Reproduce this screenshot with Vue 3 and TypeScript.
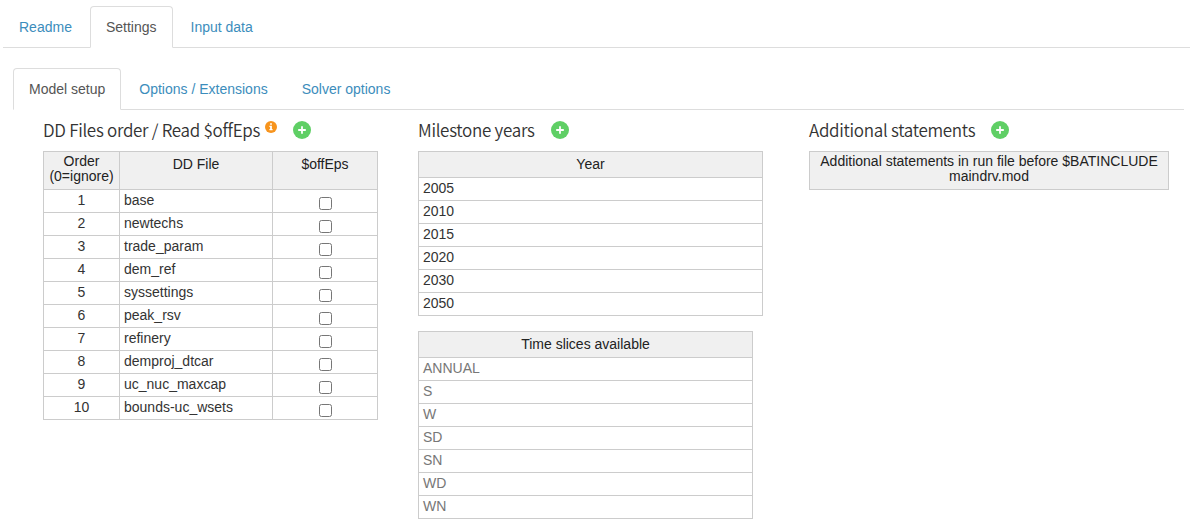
<script setup lang="ts">
import { ref } from 'vue'

interface DdFile {
  order: number
  name: string
  offEps: boolean
}

const mainTabs: string[] = ['Readme', 'Settings', 'Input data']
const subTabs: string[] = ['Model setup', 'Options / Extensions', 'Solver options']
const activeMain = ref<string>('Settings')
const activeSub = ref<string>('Model setup')

const names: string[] = [
  'base', 'newtechs', 'trade_param', 'dem_ref', 'syssettings',
  'peak_rsv', 'refinery', 'demproj_dtcar', 'uc_nuc_maxcap', 'bounds-uc_wsets',
]
const files = ref<DdFile[]>(names.map((name, i) => ({ order: i + 1, name, offEps: false })))
const years: number[] = [2005, 2010, 2015, 2020, 2030, 2050]
const slices: string[] = ['ANNUAL', 'S', 'W', 'SD', 'SN', 'WD', 'WN']
</script>

<template>
  <div class="page">
    <nav class="tabs">
      <a v-for="t in mainTabs" :key="t" class="tab" :class="{ active: t === activeMain }" @click="activeMain = t">{{ t }}</a>
    </nav>
    <div class="pane">
      <nav class="tabs">
        <a v-for="t in subTabs" :key="t" class="tab" :class="{ active: t === activeSub }" @click="activeSub = t">{{ t }}</a>
      </nav>
      <div class="columns">
        <section class="col-files">
          <header class="title">
            <h4 class="t-files">DD Files order / Read $offEps</h4>
            <svg class="info" viewBox="0 0 12 12" width="12" height="12">
              <circle cx="6" cy="6" r="6" fill="#f7941d" />
              <path d="M5.1 2.2h1.8v1.6H5.1zM4.4 4.8h2.5v3.3h.7v1.2H4.4V8.1h.7V6h-.7z" fill="#fff" />
            </svg>
            <svg class="add" viewBox="0 0 18 18" width="18" height="18">
              <circle cx="9" cy="9" r="9" fill="#5fcf65" />
              <path d="M9 5.2v7.6M5.2 9h7.6" stroke="#fff" stroke-width="1.8" />
            </svg>
          </header>
          <table class="w-files">
            <colgroup><col class="c1" /><col class="c2" /><col class="c3" /></colgroup>
            <thead>
              <tr class="tall">
                <th class="wrap">Order<br />(0=ignore)</th>
                <th>DD File</th>
                <th>$offEps</th>
              </tr>
            </thead>
            <tbody>
              <tr v-for="f in files" :key="f.order">
                <td class="center">{{ f.order }}</td>
                <td>{{ f.name }}</td>
                <td><input v-model="f.offEps" type="checkbox" /></td>
              </tr>
            </tbody>
          </table>
        </section>

        <section class="col-years">
          <header class="title">
            <h4 class="t-years">Milestone years</h4>
            <svg class="add" viewBox="0 0 18 18" width="18" height="18">
              <circle cx="9" cy="9" r="9" fill="#5fcf65" />
              <path d="M9 5.2v7.6M5.2 9h7.6" stroke="#fff" stroke-width="1.8" />
            </svg>
          </header>
          <table class="w-years">
            <thead><tr><th>Year</th></tr></thead>
            <tbody><tr v-for="y in years" :key="y"><td>{{ y }}</td></tr></tbody>
          </table>
          <table class="w-slices">
            <thead><tr><th>Time slices available</th></tr></thead>
            <tbody><tr v-for="s in slices" :key="s"><td class="dim">{{ s }}</td></tr></tbody>
          </table>
        </section>

        <section class="col-extra">
          <header class="title">
            <h4 class="t-extra">Additional statements</h4>
            <svg class="add" viewBox="0 0 18 18" width="18" height="18">
              <circle cx="9" cy="9" r="9" fill="#5fcf65" />
              <path d="M9 5.2v7.6M5.2 9h7.6" stroke="#fff" stroke-width="1.8" />
            </svg>
          </header>
          <table class="w-extra">
            <thead>
              <tr class="tall">
                <th class="wrap">Additional statements in run file before $BATINCLUDE<br />maindrv.mod</th>
              </tr>
            </thead>
          </table>
        </section>
      </div>
    </div>
  </div>
</template>

<style>
body {
  margin: 0;
  background: #fff;
}
</style>

<style scoped>
.page {
  box-sizing: border-box;
  height: 525px;
  overflow: hidden;
  padding: 6px 0 0 3px;
  font: 14px/20px "Liberation Sans", Arial, sans-serif;
  color: #333;
}
.tabs {
  display: flex;
  gap: 2px;
  border-bottom: 1px solid #ddd;
}
.tab {
  padding: 10px 15px;
  border: 1px solid transparent;
  border-radius: 4px 4px 0 0;
  margin-bottom: -1px;
  color: #3c8dbc;
  cursor: pointer;
  white-space: nowrap;
}
.tab.active {
  color: #555;
  background: #fff;
  border-color: #ddd #ddd #fff;
}
.pane {
  padding: 20px 6px 0 10px;
}
.columns {
  display: grid;
  grid-template-columns: 375px 391px 360px;
  padding: 7px 0 0 30px;
}
.title {
  display: flex;
  align-items: center;
  height: 26px;
  margin-bottom: 8px;
}
h4 {
  margin: 0;
  font: 350 17px/26px "Noto Sans CJK SC", "Noto Sans", sans-serif;
  letter-spacing: -0.29px;
  white-space: nowrap;
  color: #333;
}
.t-files { width: 222px; }
.t-years { width: 133px; }
.t-extra { width: 182px; }
.info {
  margin-bottom: 7px;
  margin-right: 16px;
}
table {
  table-layout: fixed;
  border-collapse: separate;
  border-spacing: 0;
  border-top: 1px solid #ccc;
  border-left: 1px solid #ccc;
}
th,
td {
  box-sizing: border-box;
  height: 23px;
  padding: 0 4px;
  border-right: 1px solid #ccc;
  border-bottom: 1px solid #ccc;
  line-height: 21px;
  vertical-align: top;
  font-weight: normal;
  text-align: left;
  white-space: nowrap;
}
th {
  height: 26px;
  padding-top: 2px;
  background: #f0f0f0;
  color: #222;
  text-align: center;
}
.tall th { height: 38px; }
th.wrap {
  padding: 2px 0 0;
  line-height: 15px;
}
.center { text-align: center; }
.dim { color: #777; }
td input {
  display: block;
  width: 13px;
  height: 13px;
  margin: 7px auto 0;
}
.w-files { width: 335px; }
.c1 { width: 76px; }
.c2 { width: 153px; }
.c3 { width: 105px; }
.w-years { width: 345px; }
.w-slices {
  width: 335px;
  margin-top: 15px;
}
.w-extra { width: 360px; }
</style>
